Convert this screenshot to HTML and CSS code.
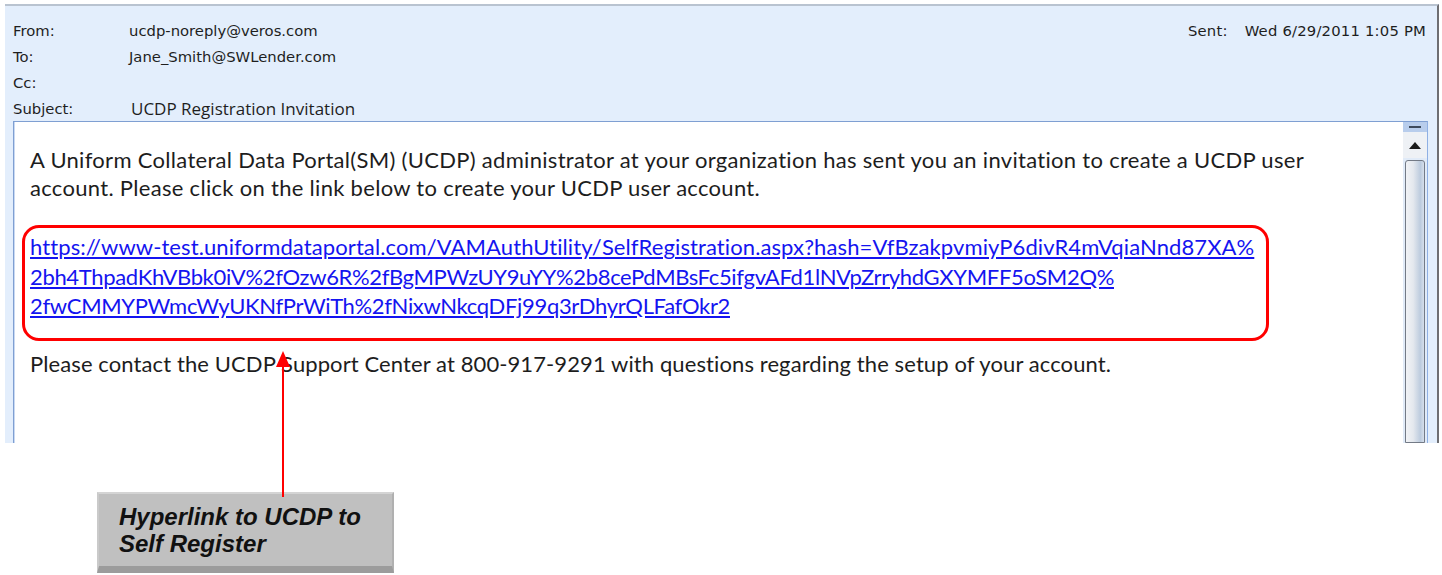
FILE: index.html
```html
<!DOCTYPE html>
<html lang="en">
<head>
<meta charset="utf-8">
<title>UCDP Registration Invitation</title>
<link rel="stylesheet" href="styles.css">
</head>
<body>
<div class="page">
  <section class="mail">
    <header class="mail-head">
      <div class="fields">
        <div class="field"><span class="label">From:</span><span class="value">ucdp-noreply@veros.com</span></div>
        <div class="field"><span class="label">To:</span><span class="value">Jane_Smith@SWLender.com</span></div>
        <div class="field"><span class="label">Cc:</span><span class="value"></span></div>
        <div class="field"><span class="label">Subject:</span><span class="value subject">UCDP Registration Invitation</span></div>
      </div>
      <div class="sent"><span class="label-sent">Sent:</span><span class="value">Wed 6/29/2011 1:05 PM</span></div>
    </header>
    <div class="mail-body">
      <div class="message">
        <p class="para intro">A Uniform Collateral Data Portal(SM) (UCDP) administrator at your organization has sent you an invitation to create a UCDP user<br>account. Please click on the link below to create your UCDP user account.</p>
        <div class="link-box">
          <a class="reg-link" href="#">https://www-test.uniformdataportal.com/VAMAuthUtility/SelfRegistration.aspx?hash=VfBzakpvmiyP6divR4mVqiaNnd87XA%<br><span class="hash">2bh4ThpadKhVBbk0iV%2fOzw6R%2fBgMPWzUY9uYY%2b8cePdMBsFc5ifgvAFd1lNVpZrryhdGXYMFF5oSM2Q%<br>2fwCMMYPWmcWyUKNfPrWiTh%2fNixwNkcqDFj99q3rDhyrQLFafOkr2</span></a>
        </div>
        <p class="para">Please contact the UCDP Support Center at 800-917-9291 with questions regarding the setup of your account.</p>
      </div>
      <div class="scrollbar">
        <div class="sb-split"></div>
        <div class="sb-up"><svg width="12" height="7" viewBox="0 0 12 7"><path d="M0 7 L6 0 L12 7 Z" fill="#1b1b1b"/></svg></div>
        <div class="sb-thumb"></div>
      </div>
    </div>
  </section>

  <svg class="pointer" width="20" height="146" viewBox="0 0 20 146">
    <path d="M10 16 V146" stroke="#ff0000" stroke-width="2" fill="none"/>
    <path d="M3 16 L10 0 L17 16 Z" fill="#ff0000"/>
  </svg>

  <div class="note">
    <p class="note-text">Hyperlink to UCDP to<br>Self Register</p>
  </div>
</div>
</body>
</html>
```
FILE: styles.css
```css
html, body {
  margin: 0;
  padding: 0;
  background: #ffffff;
}

.page {
  position: relative;
  width: 1442px;
  height: 575px;
  overflow: hidden;
}

/* message window */
.mail {
  margin: 4px 3px 0 5px;
  height: 439px;
  box-sizing: border-box;
  background: #e3eefc;
  border-top: 2px solid #b9c3d0;
  border-right: 2px solid #6e6e72;
  overflow: hidden;
  display: flex;
  flex-direction: column;
}

.mail-head {
  flex: none;
  display: flex;
  justify-content: space-between;
  padding: 11px 11px 0 8px;
  height: 115px;
  box-sizing: border-box;
  font-family: "DejaVu Sans", sans-serif;
  font-size: 14.8px;
  color: #1e1e1e;
}

.fields {
  flex: none;
  display: flex;
  flex-direction: column;
}

.field {
  flex: none;
  display: flex;
  height: 26px;
  align-items: center;
}

.label {
  width: 116px;
  flex: none;
}

.subject {
  font-family: "Open Sans", sans-serif;
  font-size: 17px;
  padding-left: 2px;
}

.sent {
  display: flex;
  height: 26px;
  align-items: center;
  gap: 17px;
  letter-spacing: 0.2px;
}

/* body pane */
.mail-body {
  margin-left: 8px;
  margin-right: 9px;
  flex: 1;
  display: flex;
  background: #ffffff;
  border: 1px solid #7f9fd2;
  border-bottom: none;
  border-right: 1px solid #8fb0e4;
  box-shadow: inset 1px 0 0 #c9d9f2;
}

.message {
  flex: 1;
  padding: 24px 0 0 16px;
  font-family: "Lato", sans-serif;
  font-size: 22px;
  letter-spacing: 0.1px;
  line-height: 28px;
  color: #1d1d1d;
  white-space: nowrap;
}

.para {
  margin: 0;
}

.intro {
  letter-spacing: 0.3px;
}

.link-box {
  margin: 23px 0 9px -8px;
  width: 1247px;
  box-sizing: border-box;
  border: 3px solid #ff0000;
  border-radius: 17px;
  padding: 4px 0 17px 5px;
  line-height: 29.5px;
}

.reg-link {
  color: #1414f0;
  text-decoration: underline;
  text-underline-offset: 2px;
}

.hash {
  letter-spacing: -0.33px;
}

/* vertical scrollbar */
.scrollbar {
  width: 24px;
  flex: none;
  background: #e1ebf8;
  display: flex;
  flex-direction: column;
  align-items: center;
}

.sb-split {
  width: 24px;
  height: 10px;
  background: #b8cdec;
  position: relative;
}

.sb-split::after {
  content: "";
  position: absolute;
  left: 6px;
  top: 4px;
  width: 12px;
  height: 2px;
  background: #3d4a5c;
}

.sb-up {
  width: 24px;
  height: 26px;
  display: flex;
  align-items: center;
  justify-content: center;
  background: #eef1f5;
}

.sb-thumb {
  width: 20px;
  flex: 1;
  margin-top: 2px;
  box-sizing: border-box;
  border: 1px solid #737a86;
  border-radius: 3px 3px 0 0;
  background: linear-gradient(to right, #f1f3f6 0%, #e4e8ee 40%, #bccbde 80%, #d6dfeb 100%);
}

/* callout annotation */
.pointer {
  position: absolute;
  left: 273px;
  top: 351px;
}

.note {
  margin: 49px 0 0 97px;
  width: 297px;
  height: 81px;
  box-sizing: border-box;
  background: #c0c0c0;
  border-top: 2px solid #d4d4d4;
  border-left: 2px solid #cacaca;
  border-right: 2px solid #b0b0b0;
  border-bottom: 7px solid #9c9c9c;
  padding: 9px 0 0 20px;
}

.note-text {
  margin: 0;
  font-family: "Liberation Sans", Arial, sans-serif;
  font-weight: bold;
  font-style: italic;
  font-size: 24px;
  line-height: 27px;
  color: #111111;
}
```
